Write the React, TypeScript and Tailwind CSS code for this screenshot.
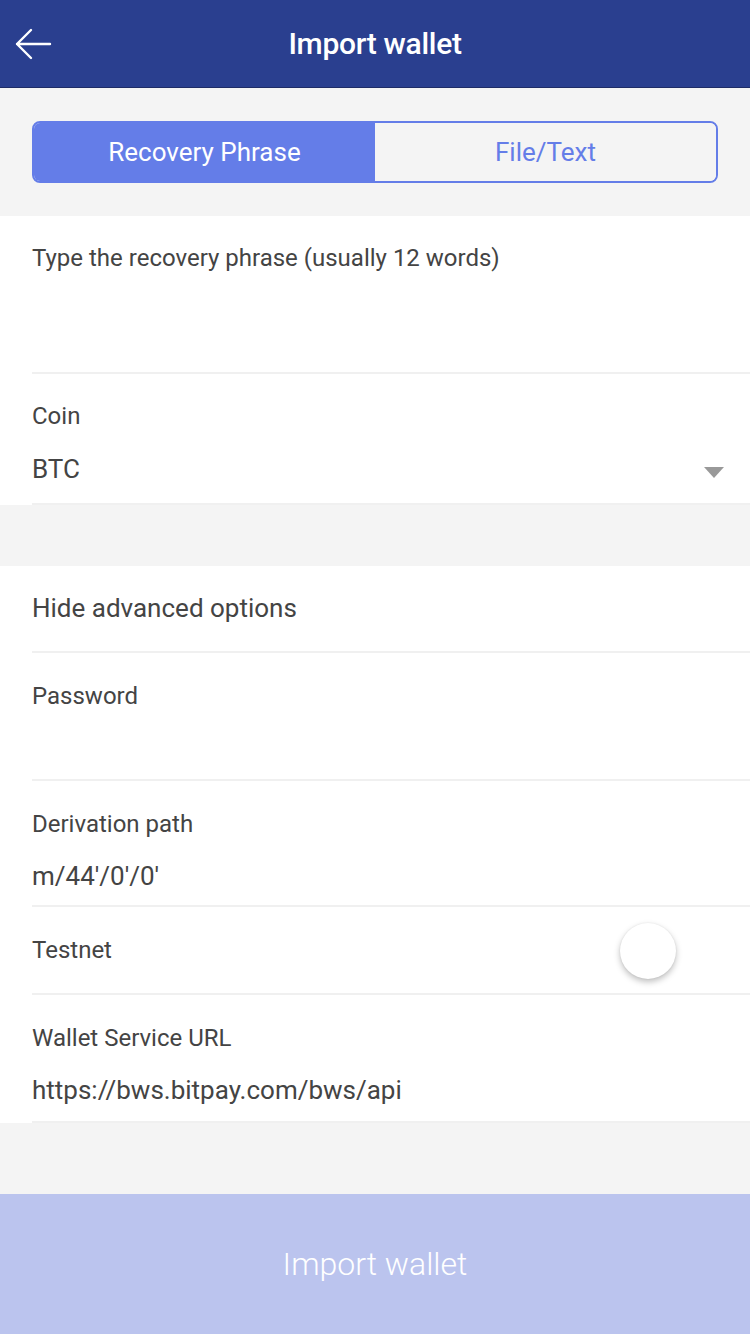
import React from "react";

function Row({ children, className = "" }: { children: React.ReactNode; className?: string }) {
  return (
    <div className={"ml-[32px] border-b-2 border-[#f0f0f0] " + className}>{children}</div>
  );
}

export default function App() {
  return (
    <div
      className="w-[750px] h-[1334px] bg-[#f4f4f4] flex flex-col text-[#444444]"
      style={{ fontFamily: "Roboto, 'Noto Sans', sans-serif" }}
    >
      <header className="h-[88px] bg-[#2a3f8f] border-b border-[#1e2c66] flex items-center relative shrink-0">
        <svg className="absolute left-[14px] top-[28px]" width="38" height="32" viewBox="0 0 38 32" fill="none">
          <path d="M36 16H3M17 2L3 16l14 14" stroke="#ffffff" strokeWidth="2.4" strokeLinecap="round" strokeLinejoin="round" />
        </svg>
        <div className="w-full text-center text-white text-[30px] font-medium tracking-[-0.3px] pb-[1px]">Import wallet</div>
      </header>

      <div className="px-[32px] pt-[33px] pb-[33px] shrink-0">
        <div className="flex h-[62px] rounded-[8px] border-2 border-[#647de8] overflow-hidden">
          <div className="w-1/2 bg-[#647de8] text-white text-[26px] flex items-center justify-center">Recovery Phrase</div>
          <div className="w-1/2 bg-[#f4f4f4] text-[#647de8] text-[26px] flex items-center justify-center">File/Text</div>
        </div>
      </div>

      <section className="bg-white shrink-0">
        <Row className="h-[158px] pt-[27px]">
          <div className="text-[24px] leading-[30px]">Type the recovery phrase (usually 12 words)</div>
        </Row>
        <Row className="h-[131px] pt-[27px] border-b-0">
          <div className="text-[24px] leading-[30px]">Coin</div>
          <div className="flex items-center justify-between pr-[26px] mt-[22px]">
            <div className="text-[26px] leading-[32px]">BTC</div>
            <div className="w-0 h-0 border-l-[10px] border-r-[10px] border-t-[11px] border-l-transparent border-r-transparent border-t-[#999999] mt-[6px]" />
          </div>
        </Row>
      </section>

      <div className="h-[61px] shrink-0" />

      <section className="bg-white shrink-0">
        <Row className="h-[87px] flex items-center">
          <div className="text-[26px] leading-[32px] pb-[1px]">Hide advanced options</div>
        </Row>
        <Row className="h-[128px] pt-[28px]">
          <div className="text-[24px] leading-[30px]">Password</div>
        </Row>
        <Row className="h-[126px] pt-[28px]">
          <div className="text-[24px] leading-[30px]">Derivation path</div>
          <div className="text-[26px] leading-[32px] mt-[21px]">m/44'/0'/0'</div>
        </Row>
        <Row className="h-[88px] flex items-center justify-between pr-[74px]">
          <div className="text-[24px] leading-[30px]">Testnet</div>
          <div className="w-[56px] h-[56px] rounded-full bg-white shadow-[0_3px_6px_rgba(0,0,0,0.25),0_0_2px_rgba(0,0,0,0.08)] mt-[2px]" />
        </Row>
        <Row className="h-[128px] pt-[28px] border-b-0">
          <div className="text-[24px] leading-[30px]">Wallet Service URL</div>
          <div className="text-[26px] leading-[32px] mt-[21px]">https://bws.bitpay.com/bws/api</div>
        </Row>
      </section>

      <div className="flex-1" />

      <button className="h-[140px] w-full bg-[#bbc4ee] text-white text-[32px] font-light shrink-0">Import wallet</button>
    </div>
  );
}
